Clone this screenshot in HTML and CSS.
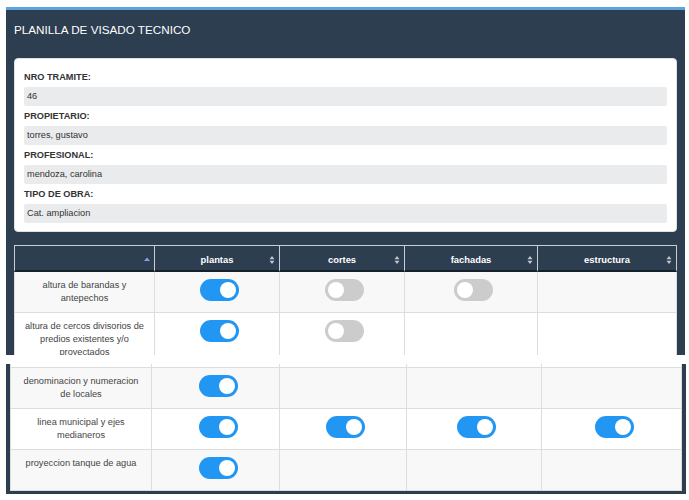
FILE: index.html
```html
<!DOCTYPE html>
<html lang="es">
<head>
<meta charset="utf-8">
<title>Planilla de visado técnico</title>
<link rel="stylesheet" href="styles.css">
</head>
<body>
<section class="shot shot-top">
  <div class="panel panel-top">
    <h1 class="title">PLANILLA DE VISADO TECNICO</h1>
    <div class="card">
      <div class="field-label">NRO TRAMITE:</div>
      <div class="field-value">46</div>
      <div class="field-label">PROPIETARIO:</div>
      <div class="field-value">torres, gustavo</div>
      <div class="field-label">PROFESIONAL:</div>
      <div class="field-value">mendoza, carolina</div>
      <div class="field-label">TIPO DE OBRA:</div>
      <div class="field-value">Cat. ampliacion</div>
    </div>
    <table class="grid grid-top">
      <colgroup><col class="c1"><col class="c2"><col class="c3"><col class="c4"><col class="c5"></colgroup>
      <thead>
        <tr>
          <th><div class="th-in"><span class="sp"></span><span class="lbl"></span><span class="sp sort"><svg width="6" height="10" viewBox="0 0 6 10"><polygon points="0,6 3,2.5 6,6" fill="#8c9be0"/></svg></span></div></th>
          <th><div class="th-in"><span class="sp"></span><span class="lbl">plantas</span><span class="sp sort"><svg width="6" height="10" viewBox="0 0 6 10"><polygon points="0.5,4.3 3,1 5.5,4.3" fill="#c3c7cc"/><polygon points="0.5,5.7 3,9 5.5,5.7" fill="#c3c7cc"/></svg></span></div></th>
          <th><div class="th-in"><span class="sp"></span><span class="lbl">cortes</span><span class="sp sort"><svg width="6" height="10" viewBox="0 0 6 10"><polygon points="0.5,4.3 3,1 5.5,4.3" fill="#c3c7cc"/><polygon points="0.5,5.7 3,9 5.5,5.7" fill="#c3c7cc"/></svg></span></div></th>
          <th><div class="th-in"><span class="sp"></span><span class="lbl">fachadas</span><span class="sp sort"><svg width="6" height="10" viewBox="0 0 6 10"><polygon points="0.5,4.3 3,1 5.5,4.3" fill="#c3c7cc"/><polygon points="0.5,5.7 3,9 5.5,5.7" fill="#c3c7cc"/></svg></span></div></th>
          <th><div class="th-in"><span class="sp"></span><span class="lbl">estructura</span><span class="sp sort"><svg width="6" height="10" viewBox="0 0 6 10"><polygon points="0.5,4.3 3,1 5.5,4.3" fill="#c3c7cc"/><polygon points="0.5,5.7 3,9 5.5,5.7" fill="#c3c7cc"/></svg></span></div></th>
        </tr>
      </thead>
      <tbody>
        <tr class="odd">
          <td class="item">altura de barandas y antepechos</td>
          <td class="sw"><span class="toggle on"></span></td>
          <td class="sw"><span class="toggle"></span></td>
          <td class="sw"><span class="toggle"></span></td>
          <td class="sw"></td>
        </tr>
        <tr>
          <td class="item">altura de cercos divisorios de predios existentes y/o proyectados</td>
          <td class="sw"><span class="toggle on"></span></td>
          <td class="sw"><span class="toggle"></span></td>
          <td class="sw"></td>
          <td class="sw"></td>
        </tr>
      </tbody>
    </table>
  </div>
</section>
<section class="shot shot-bottom">
  <div class="panel panel-bottom">
    <table class="grid grid-bottom">
      <colgroup><col class="c1"><col class="c2"><col class="c3"><col class="c4"><col class="c5"></colgroup>
      <tbody>
        <tr class="tail"><td></td><td></td><td></td><td></td><td></td></tr>
        <tr class="odd">
          <td class="item">denominacion y numeracion de locales</td>
          <td class="sw"><span class="toggle on"></span></td>
          <td class="sw"></td>
          <td class="sw"></td>
          <td class="sw"></td>
        </tr>
        <tr>
          <td class="item">linea municipal y ejes medianeros</td>
          <td class="sw"><span class="toggle on"></span></td>
          <td class="sw"><span class="toggle on"></span></td>
          <td class="sw"><span class="toggle on"></span></td>
          <td class="sw"><span class="toggle on"></span></td>
        </tr>
        <tr class="odd">
          <td class="item">proyeccion tanque de agua</td>
          <td class="sw"><span class="toggle on"></span></td>
          <td class="sw"></td>
          <td class="sw"></td>
          <td class="sw"></td>
        </tr>
      </tbody>
    </table>
  </div>
</section>
</body>
</html>
```
FILE: styles.css
```css
html, body {
  margin: 0;
  padding: 0;
  background: #ffffff;
}

body {
  font-family: "Liberation Sans", Arial, sans-serif;
  color: #333333;
}

.shot-top {
  height: 355px;
  overflow: hidden;
  padding: 7px 4px 0 6px;
  box-sizing: border-box;
}

.shot-bottom {
  margin-top: 9px;
  padding: 0 3px 0 6px;
}

.panel {
  background: #2c3e50;
}

.panel-top {
  border-top: 3px solid #5ba4dc;
  padding: 0 8px 8px;
}

.panel-bottom {
  padding: 0 4px 3px;
}

.title {
  margin: 0;
  padding: 10px 0 18px;
  font-size: 11.7px;
  line-height: 20px;
  font-weight: normal;
  color: #ffffff;
}

.card {
  background: #ffffff;
  border: 1px solid #dde1e4;
  border-radius: 4px;
  padding: 8px 9px;
  margin-bottom: 13px;
}

.field-label {
  font-size: 9.2px;
  line-height: 20px;
  height: 20px;
  font-weight: bold;
  color: #333333;
}

.field-value {
  font-size: 9.2px;
  line-height: 19px;
  height: 19px;
  background: #eaebec;
  border-radius: 2px;
  padding: 0 3px;
  color: #333333;
}

.grid {
  width: 100%;
  table-layout: fixed;
  border-collapse: separate;
  border-spacing: 0;
}

.grid-top col.c1 { width: 141px; }
.grid-top col.c2 { width: 125px; }
.grid-top col.c3 { width: 125px; }
.grid-top col.c4 { width: 133px; }
.grid-top col.c5 { width: 139px; }

.grid-bottom col.c1 { width: 142px; }
.grid-bottom col.c2 { width: 128px; }
.grid-bottom col.c3 { width: 127px; }
.grid-bottom col.c4 { width: 135px; }
.grid-bottom col.c5 { width: 140px; }

.grid th {
  background: #2c3e50;
  color: #ffffff;
  font-size: 9.4px;
  line-height: 11px;
  font-weight: bold;
  padding: 8px 4px 5px 4px;
  border-top: 1px solid #c9ced3;
  border-right: 1px solid #c9ced3;
  border-bottom: 2px solid #16202a;
}

.grid th:first-child {
  border-left: 1px solid #c9ced3;
}

.th-in {
  display: flex;
  align-items: center;
}

.th-in .sp {
  flex: 1 1 0;
  display: flex;
  justify-content: flex-end;
  align-items: center;
}

.th-in .lbl {
  white-space: nowrap;
}

.th-in svg {
  display: block;
}

.grid td {
  background: #ffffff;
  border-right: 1px solid #dddddd;
  border-bottom: 1px solid #dddddd;
  padding: 7px 7px;
  vertical-align: top;
  text-align: center;
  font-size: 9.2px;
  line-height: 13px;
  color: #444444;
}

.grid td:first-child {
  border-left: 1px solid #dddddd;
}

.grid tr.odd td {
  background: #f8f8f8;
}

.grid td.sw {
  padding: 7px 2px 7px 7px;
}

.grid tr.tail td {
  height: 3px;
  padding: 0;
}

.toggle {
  display: block;
  position: relative;
  width: 39px;
  height: 22px;
  margin: 0 auto 4px;
  border-radius: 11px;
  background: #cccccc;
}

.toggle::after {
  content: "";
  position: absolute;
  top: 3px;
  left: 3px;
  width: 16px;
  height: 16px;
  border-radius: 50%;
  background: #ffffff;
}

.toggle.on {
  background: #2196f3;
}

.toggle.on::after {
  left: auto;
  right: 3px;
}
```
